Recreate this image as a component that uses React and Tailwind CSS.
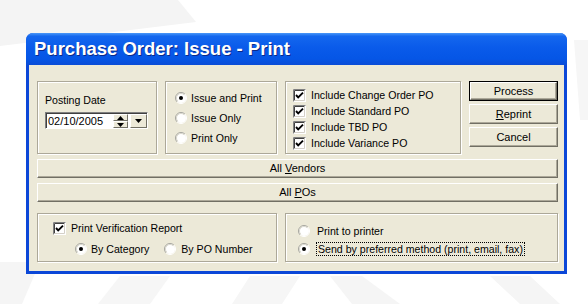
import React from "react";

const font = { fontFamily: '"Liberation Sans", Arial, sans-serif' };

function Radio({ checked }) {
  return (
    <svg width="12" height="12" viewBox="0 0 12 12" className="shrink-0">
      <circle cx="6" cy="6" r="5" fill="#fff" />
      <path d="M2.1 9.9 A5.5 5.5 0 0 1 9.9 2.1" fill="none" stroke="#a6a6a0" strokeWidth="1" />
      <path d="M9.9 2.1 A5.5 5.5 0 0 1 2.1 9.9" fill="none" stroke="#ffffff" strokeWidth="1" />
      <path d="M2.8 9.2 A4.5 4.5 0 0 1 9.2 2.8" fill="none" stroke="#d8d6cc" strokeWidth="1" />
      {checked && <circle cx="6" cy="6" r="2" fill="#000" />}
    </svg>
  );
}

function Check({ checked = true }) {
  return (
    <svg width="13" height="13" viewBox="0 0 13 13" className="shrink-0">
      <rect x="0" y="0" width="13" height="13" fill="#fff" />
      <path d="M0.5 12.5 V0.5 H12.5" fill="none" stroke="#808080" />
      <path d="M1.5 11.5 V1.5 H11.5" fill="none" stroke="#404040" />
      <path d="M1.5 11.5 H11.5 V1.5" fill="none" stroke="#d4d0c8" />
      {checked && (
        <path d="M3 6 L5.2 8.4 L10 3.6" fill="none" stroke="#000" strokeWidth="1.9" />
      )}
    </svg>
  );
}

function Group({ className = "", children }) {
  return (
    <div
      className={`border border-[#aca899] shadow-[inset_1px_1px_0_#fff,1px_1px_0_#fff] ${className}`}
    >
      {children}
    </div>
  );
}

function Btn({ children, isDefault, className = "" }) {
  return (
    <button
      className={`flex items-center justify-center bg-[#ece9d8] text-[11px] text-black ${
        isDefault ? "border border-black" : ""
      } ${className}`}
      style={font}
    >
      <span className="flex h-full w-full items-center justify-center border-t border-l border-t-white border-l-white border-b border-r border-b-[#716f64] border-r-[#716f64] shadow-[inset_-1px_-1px_0_#aca899]">
        {children}
      </span>
    </button>
  );
}

function Arrow({ up, size = 7 }) {
  return (
    <svg width={size} height="4" viewBox="0 0 7 4">
      <path d={up ? "M0 4 L3.5 0 L7 4 Z" : "M0 0 L7 0 L3.5 4 Z"} fill="#000" />
    </svg>
  );
}

export default function App() {
  return (
    <div className="relative h-[304px] w-[588px] overflow-hidden bg-white pl-[26px] pt-[33px]" style={font}>
      {/* faint watermark behind the window */}
      <svg className="absolute left-0 top-0" width="588" height="304">
        <polygon points="0,0 178,0 196,22 0,46" fill="#f4f4f4" />
        <polygon points="0,262 40,262 22,304 0,304" fill="#f5f5f5" />
        <polygon points="120,276 170,276 150,304 98,304" fill="#f6f6f6" />
        <polygon points="250,276 300,276 282,304 232,304" fill="#f6f6f6" />
        <polygon points="330,276 362,276 400,304 352,304" fill="#f5f5f5" />
        <polygon points="490,276 530,276 560,304 520,304" fill="#f5f5f5" />
        <polygon points="574,40 588,40 588,120 580,120" fill="#f6f6f6" />
      </svg>

      <div className="relative flex h-[241px] w-[541px] flex-col overflow-hidden rounded-t-[7px] bg-[#0b47d8]">
        {/* Title bar */}
        <div className="flex h-[32px] items-center bg-[linear-gradient(180deg,#4a98f8_0%,#1467ee_10%,#0a5bea_45%,#0556e6_80%,#0a4cd6_100%)] pl-[8px]">
          <span className="text-[18.5px] font-bold leading-none text-white [text-shadow:1px_1px_0_#0a2a8a]">
            Purchase Order: Issue - Print
          </span>
        </div>

        {/* Body */}
        <div className="mx-[3px] mb-[3px] flex flex-1 flex-col bg-[#ece9d8] pl-[8px] pr-[6px] pt-[16px] text-[10.6px] leading-[13px] text-black">
          {/* Row 1 */}
          <div className="flex h-[73px] gap-[8px]">
            <Group className="w-[120px] pl-[7px] pt-[12px]">
              <div>Posting Date</div>
              <div className="mt-[5px] flex h-[17px] w-[103px] border-t border-l border-t-[#808080] border-l-[#808080] border-b border-r border-b-white border-r-white text-[11px]">
                <div className="flex flex-1 items-center border-t border-l border-t-[#404040] border-l-[#404040] bg-white">
                  <span className="pl-[1px]">02/10/2005</span>
                  <div className="ml-auto flex h-full w-[15px] flex-col">
                    <div className="flex flex-1 items-center justify-center border-t border-l border-white border-b border-r border-b-[#716f64] border-r-[#716f64] bg-[#ece9d8]">
                      <Arrow up size={7} />
                    </div>
                    <div className="flex flex-1 items-center justify-center border-t border-l border-white border-b border-r border-b-[#716f64] border-r-[#716f64] bg-[#ece9d8]">
                      <Arrow size={7} />
                    </div>
                  </div>
                  <div className="ml-[2px] flex h-full w-[17px] items-center justify-center border-t border-l border-white border-b border-r border-b-[#716f64] border-r-[#716f64] bg-[#ece9d8]">
                    <Arrow size={7} />
                  </div>
                </div>
              </div>
            </Group>

            <Group className="flex w-[112px] flex-col pl-[9px] pt-[6px]">
              {[
                ["Issue and Print", true],
                ["Issue Only", false],
                ["Print Only", false],
              ].map(([label, on]) => (
                <div key={label} className="flex h-[20px] items-center gap-[4px]">
                  <Radio checked={on} />
                  <span>{label}</span>
                </div>
              ))}
            </Group>

            <Group className="flex w-[176px] flex-col pl-[7px] pt-[5px]">
              {[
                "Include Change Order PO",
                "Include Standard PO",
                "Include TBD PO",
                "Include Variance PO",
              ].map((label) => (
                <div key={label} className="flex h-[16px] items-center gap-[5px]">
                  <Check />
                  <span>{label}</span>
                </div>
              ))}
            </Group>

            <div className="flex w-[89px] flex-col gap-[3px]">
              <Btn isDefault className="h-[20px]">Process</Btn>
              <Btn className="h-[20px]">
                <span>
                  <span className="underline">R</span>eprint
                </span>
              </Btn>
              <Btn className="h-[20px]">Cancel</Btn>
            </div>
          </div>

          {/* Row 2 */}
          <Btn className="mt-[5px] h-[19px] w-full">
            <span>
              All <span className="underline">V</span>endors
            </span>
          </Btn>
          <Btn className="mt-[5px] h-[19px] w-full">
            <span>
              All <span className="underline">P</span>Os
            </span>
          </Btn>

          {/* Row 3 */}
          <div className="mt-[11px] flex h-[49px] gap-[8px]">
            <Group className="flex w-[240px] flex-col pl-[15px] pt-[6px]">
              <div className="flex h-[16px] items-center gap-[5px]">
                <Check />
                <span>Print Verification Report</span>
              </div>
              <div className="ml-[22px] mt-[5px] flex h-[16px] items-center">
                <Radio checked />
                <span className="ml-[4px]">By Category</span>
                <span className="ml-[15px]">
                  <Radio />
                </span>
                <span className="ml-[5px]">By PO Number</span>
              </div>
            </Group>

            <Group className="flex w-[273px] flex-col pl-[12px] pt-[9px]">
              <div className="flex h-[16px] items-center gap-[6px]">
                <Radio />
                <span className="px-[1px]">Print to printer</span>
              </div>
              <div className="mt-[2px] flex h-[16px] items-center gap-[6px]">
                <Radio checked />
                <span className="border border-dotted border-black px-[1px] leading-[12px]">
                  Send by preferred method (print, email, fax)
                </span>
              </div>
            </Group>
          </div>
        </div>
      </div>
    </div>
  );
}
